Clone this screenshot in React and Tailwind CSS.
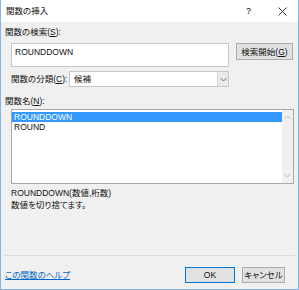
import React from "react";

const Chevron = ({ up = false, color = "#a0a0a0" }) => (
  <svg width="7" height="5" viewBox="0 0 7 5">
    {up ? (
      <polyline points="0.5,4 3.5,1 6.5,4" fill="none" stroke={color} strokeWidth="1" />
    ) : (
      <polyline points="0.5,1 3.5,4 6.5,1" fill="none" stroke={color} strokeWidth="1" />
    )}
  </svg>
);

export default function App() {
  return (
    <div
      className="w-[299px] h-[290px] bg-[#f0f0f0] border-l border-r border-b border-[#86b5e6] flex flex-col text-[8.5px] leading-[10px] text-[#111] [font-feature-settings:'palt'] overflow-hidden"
      style={{ fontFamily: "'Liberation Sans','Noto Sans CJK JP',sans-serif" }}
    >
      {/* title bar */}
      <div className="h-[22px] bg-white flex items-center shrink-0">
        <span className="pl-[5px] text-[8.5px]">関数の挿入</span>
        <span className="ml-auto mr-[27px] text-[9px]">?</span>
        <svg width="9" height="9" viewBox="0 0 9 9" className="mr-[11px]">
          <line x1="0.5" y1="0.5" x2="8.5" y2="8.5" stroke="#222" strokeWidth="0.9" />
          <line x1="8.5" y1="0.5" x2="0.5" y2="8.5" stroke="#222" strokeWidth="0.9" />
        </svg>
      </div>

      {/* label search */}
      <div className="mt-[5px] h-[10px] pl-[4px]">
        関数の検索(<span className="underline">S</span>):
      </div>

      {/* search row */}
      <div className="mt-[6px] flex items-start">
        <div className="ml-[10px] w-[218px] h-[24px] bg-white border border-[#c6c6c6] px-[3px] pt-[3px]">
          ROUNDDOWN
        </div>
        <div className="ml-[7px] w-[57px] h-[17px] bg-[#e1e1e1] border border-[#adadad] flex items-center justify-center">
          検索開始(<span className="underline">G</span>)
        </div>
      </div>

      {/* category row */}
      <div className="mt-[4px] flex items-center">
        <div className="ml-[10px] w-[58px]">
          関数の分類(<span className="underline">C</span>):
        </div>
        <div className="w-[160px] h-[16px] bg-white border border-[#c6c6c6] flex items-center">
          <span className="pl-[4px]">候補</span>
          <div className="ml-auto w-[11px] h-full bg-[#eaeaea] border-l border-[#d0d0d0] flex items-center justify-center">
            <Chevron color="#707070" />
          </div>
        </div>
      </div>

      {/* list label */}
      <div className="mt-[9px] h-[10px] pl-[4px]">
        関数名(<span className="underline">N</span>):
      </div>

      {/* list */}
      <div className="mt-[3px] ml-[10px] w-[283px] h-[75px] bg-white border border-[#a8a8a8] flex">
        <div className="flex-1 pt-[2px]">
          <div className="h-[10px] bg-[#3399ff] text-white pl-[2px] leading-[10px]">ROUNDDOWN</div>
          <div className="h-[10px] pl-[2px] leading-[10px] mt-[0px]">ROUND</div>
        </div>
        <div className="w-[11px] h-full bg-[#f0f0f0] flex flex-col items-center justify-between py-[5px]">
          <Chevron up color="#b8b8b8" />
          <Chevron color="#b8b8b8" />
        </div>
      </div>

      {/* description */}
      <div className="mt-[4px] h-[10px] pl-[10px]">ROUNDDOWN(数値,桁数)</div>
      <div className="mt-[2px] h-[10px] pl-[10px]">数値を切り捨てます。</div>

      {/* separator */}
      <div className="mt-[45px] ml-[4px] w-[290px] h-px bg-[#dcdcdc]" />

      {/* footer */}
      <div className="mt-[11px] flex items-center">
        <span className="pl-[4px] text-[#0066cc] underline">この関数のヘルプ</span>
        <div className="ml-auto w-[50px] h-[16px] bg-[#e1e1e1] border border-[#0078d7] flex items-center justify-center">
          OK
        </div>
        <div className="ml-[7px] mr-[13px] w-[43px] h-[16px] bg-[#e1e1e1] border border-[#adadad] flex items-center justify-center">
          キャンセル
        </div>
      </div>
    </div>
  );
}
